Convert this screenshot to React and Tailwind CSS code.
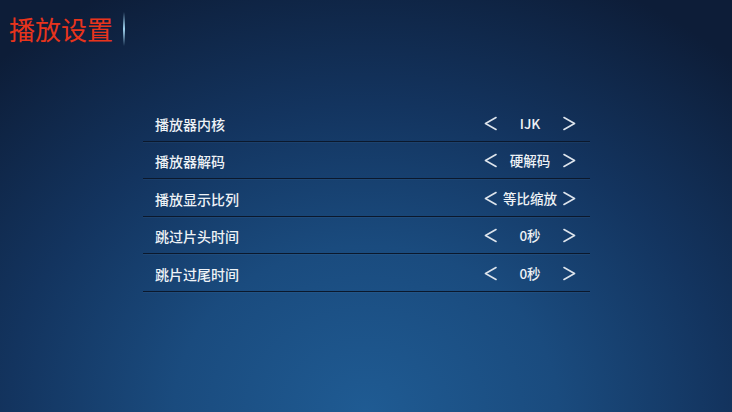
import React from "react";

const rows = [
  { label: "播放器内核", value: "IJK" },
  { label: "播放器解码", value: "硬解码" },
  { label: "播放显示比列", value: "等比缩放" },
  { label: "跳过片头时间", value: "0秒" },
  { label: "跳片过尾时间", value: "0秒" },
];

function Chevron({ dir }) {
  return (
    <svg width="13" height="15" viewBox="0 0 13 15" className="shrink-0">
      <path
        d={dir === "left" ? "M12 1.5 L1.5 7.5 L12 13.5" : "M1 1.5 L11.5 7.5 L1 13.5"}
        fill="none"
        stroke="#dde4ec"
        strokeWidth="1.6"
        strokeLinecap="round"
        strokeLinejoin="round"
      />
    </svg>
  );
}

export default function App() {
  return (
    <div
      className="w-[732px] h-[412px] overflow-hidden bg-[radial-gradient(ellipse_75%_115%_at_50%_100%,#1f5b93_0%,#1a4b7e_35%,#13345f_65%,#0d1d38_100%)] font-['Noto_Sans_CJK_SC','Noto_Sans',sans-serif]"
    >
      <div className="flex items-center pl-[9px] pt-[11px] h-[36px] box-content">
        <span className="text-[26px] leading-none text-[#e8341c]">播放设置</span>
        <div className="ml-[10px] w-[2px] h-[34px] bg-gradient-to-b from-transparent via-[#9fd2ee] to-transparent" />
      </div>
      <div className="ml-[143px] mt-[57px] w-[447px] flex flex-col">
        {rows.map((r) => (
          <div
            key={r.label}
            className="h-[37.5px] flex items-center pl-[12px] pr-[14px] border-b border-[#0b182c] shadow-[0_1px_0_rgba(120,160,200,0.08)]"
          >
            <span className="text-[14px] leading-none font-medium text-[#eef2f6] pt-[3px] flex-1">{r.label}</span>
            <div className="flex items-center pt-[2px]">
              <Chevron dir="left" />
              <span className="w-[66px] text-center text-[13.5px] leading-none font-medium text-[#eef2f6]">
                {r.value}
              </span>
              <Chevron dir="right" />
            </div>
          </div>
        ))}
      </div>
    </div>
  );
}
